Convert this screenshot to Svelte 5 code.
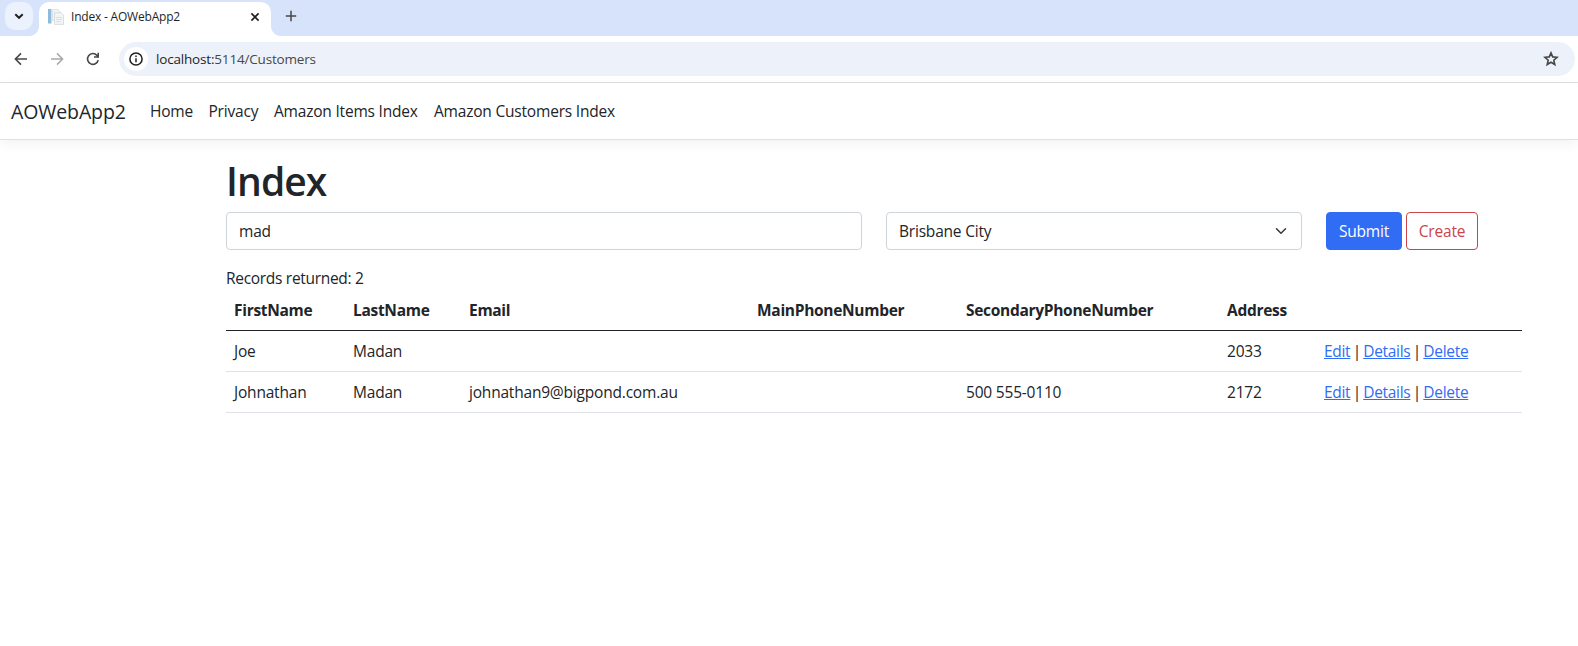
<script>
  const nav = [
    { label: 'Home', w: 42.5 },
    { label: 'Privacy', w: 49.5 },
    { label: 'Amazon Items Index', w: 144 },
    { label: 'Amazon Customers Index', w: 181 }
  ];
  const columns = ['FirstName', 'LastName', 'Email', 'MainPhoneNumber', 'SecondaryPhoneNumber', 'Address', ''];
  const rows = [
    ['Joe', 'Madan', '', '', '', '2033'],
    ['Johnathan', 'Madan', 'johnathan9@bigpond.com.au', '', '500 555-0110', '2172']
  ];
</script>

<div class="window">
  <div class="tabstrip">
    <div class="search-tabs">
      <svg width="28" height="28" viewBox="0 0 28 28"><path d="M10.3 12.2 14 15.8l3.7-3.6" fill="none" stroke="#1f1f1f" stroke-width="1.9" /></svg>
    </div>
    <div class="tab">
      <svg class="favicon" width="16" height="16" viewBox="0 0 16 16">
        <path d="M4.5.4H10l2 2v9H4.5z" fill="#f1f4f6" stroke="#d2d8dc" stroke-width=".7" />
        <rect x="0" y="0" width="3" height="14.5" fill="#8dbbdd" />
        <path d="M3 0h1.2v14.5H3z" fill="#d5e3ed" />
        <path d="M6.5 3.8h6.6l2.4 2.2v9.4h-9z" fill="#f3f5f6" stroke="#cdd3d7" stroke-width=".7" />
        <path d="M8 8.5h6M8 10.5h6M8 12.5h5" stroke="#d3d9dd" stroke-width=".8" />
      </svg>
      <span class="title">Index - AOWebApp2</span>
      <svg class="close" width="10" height="10" viewBox="0 0 10 10"><path d="M1.4 1.4l7.2 7.2M8.6 1.4 1.4 8.6" stroke="#1f1f1f" stroke-width="1.6" /></svg>
    </div>
    <svg class="plus" width="12" height="12" viewBox="0 0 12 12"><path d="M6 .8v10.4M.8 6h10.4" stroke="#474747" stroke-width="1.5" /></svg>
  </div>
  <div class="toolbar">
    <svg class="tool" width="16" height="16" viewBox="0 0 16 16"><path d="M14 8H3M8 2.4 2.4 8 8 13.6" fill="none" stroke="#474747" stroke-width="1.6" /></svg>
    <svg class="tool" width="16" height="16" viewBox="0 0 16 16"><path d="M2 8h11M8 2.4 13.6 8 8 13.6" fill="none" stroke="#a9a9a9" stroke-width="1.5" /></svg>
    <svg class="tool" width="16" height="16" viewBox="0 0 16 16"><path d="M13.2 9.1A5.4 5.4 0 1 1 12 4.4l1.5 1.6" fill="none" stroke="#474747" stroke-width="1.6" /><path d="M14 1.8v5H9V5.3h3.4V1.8z" fill="#474747" /></svg>
    <div class="omnibox">
      <div class="info">
        <svg width="14" height="14" viewBox="0 0 14 14"><circle cx="7" cy="7" r="6.1" fill="none" stroke="#1f1f1f" stroke-width="1.5" /><path d="M7 6.2v4.1M7 3.5V5" stroke="#1f1f1f" stroke-width="1.5" /></svg>
      </div>
      <span class="url"><b>localhost:</b>5114/Customers</span>
      <svg class="star" width="16" height="16" viewBox="0 0 16 16"><path d="M8 1.9l1.7 4 4.4.4-3.3 2.9 1 4.3L8 11.2l-3.8 2.3 1-4.3-3.3-2.9 4.4-.4z" fill="none" stroke="#474747" stroke-width="1.6" /></svg>
    </div>
  </div>

  <header>
    <a class="brand" href="#home">AOWebApp2</a>
    <nav>
      {#each nav as item}
        <a href="#nav" style:width="{item.w}px">{item.label}</a>
      {/each}
    </nav>
  </header>

  <main>
    <h1>Index</h1>
    <form>
      <div class="control">mad</div>
      <div class="control select">
        <span>Brisbane City</span>
        <svg width="16" height="12" viewBox="0 0 16 16" preserveAspectRatio="xMidYMid meet"><path fill="none" stroke="#343a40" stroke-linecap="round" stroke-linejoin="round" stroke-width="2" d="m2 5 6 6 6-6" /></svg>
      </div>
      <div class="actions">
        <button type="button" class="primary">Submit</button>
        <button type="button" class="danger">Create</button>
      </div>
    </form>
    <div class="count">Records returned: 2</div>
    <table>
      <colgroup><col class="c1" /><col class="c2" /><col class="c3" /><col class="c4" /><col class="c5" /><col class="c6" /><col /></colgroup>
      <thead>
        <tr>{#each columns as c}<th>{c}</th>{/each}</tr>
      </thead>
      <tbody>
        {#each rows as r}
          <tr>
            {#each r as v}<td>{v}</td>{/each}
            <td class="links"><a href="#edit">Edit</a> | <a href="#details">Details</a> | <a href="#delete">Delete</a></td>
          </tr>
        {/each}
      </tbody>
    </table>
  </main>
</div>

<style>
  :global(body) { margin: 0; background: #fff; overflow: hidden; }
  .window {
    height: 646px;
    font: 15.5px/24px "Segoe UI", "Open Sans", "Noto Sans", sans-serif;
    color: #212529;
    letter-spacing: -0.2px;
  }
  svg { display: block; flex: none; }
  .tabstrip { height: 36px; background: #d7e2fb; display: flex; align-items: flex-start; }
  .search-tabs { width: 28px; height: 28px; margin: 2px 6px 0 5px; border-radius: 10px; background: #ebf1fd; }
  .tab {
    position: relative; box-sizing: border-box; width: 232px; height: 34px; margin-top: 2px;
    padding: 1px 11px 6px 9px; border-radius: 10px 10px 0 0; background: #fff;
    display: flex; align-items: center;
  }
  .tab::before, .tab::after { content: ""; position: absolute; bottom: 0; width: 10px; height: 10px; }
  .tab::before { left: -10px; background: radial-gradient(circle at 0 0, transparent 9.5px, #fff 10.5px); }
  .tab::after { right: -10px; background: radial-gradient(circle at 100% 0, transparent 9.5px, #fff 10.5px); }
  .title { margin: 1px 0 0 7px; font-size: 12px; line-height: 16px; color: #1f1f1f; letter-spacing: -0.2px; white-space: nowrap; }
  .close { margin-left: auto; }
  .plus { margin: 10px 0 0 14px; }
  .toolbar {
    box-sizing: border-box; height: 47px; padding: 0 3px 1px 13px; border-bottom: 1px solid #dedfe0;
    display: flex; align-items: center; background: #fff;
  }
  .tool { margin-right: 20px; }
  .omnibox {
    flex: 1; box-sizing: border-box; height: 34px; margin-left: -2px; padding: 0 16px 0 5px; border-radius: 17px;
    background: #edf2fa; display: flex; align-items: center;
  }
  .info { width: 24px; height: 24px; border-radius: 50%; background: #fff; display: grid; place-items: center; }
  .url { margin-left: 8px; font-size: 13.5px; line-height: 20px; color: #474747; letter-spacing: -0.18px; }
  .url b { font-weight: 400; color: #1f1f1f; }
  .star { margin-left: auto; }
  header {
    box-sizing: border-box; height: 57px; padding: 0 11px; border-bottom: 1px solid #dee2e6;
    box-shadow: 0 4px 12px rgba(0, 0, 0, .05); display: flex; align-items: center;
  }
  header a { color: #212529; text-decoration: none; white-space: nowrap; }
  .brand { width: 115px; padding-top: 2px; margin-right: 24px; font-size: 19.5px; line-height: 30px; letter-spacing: -0.1px; }
  nav { display: flex; gap: 16px; }
  main { width: 1296px; padding-top: 17px; margin-left: 226px; }
  h1 { margin: 0 0 7px; font-size: 39px; line-height: 48px; font-weight: 600; letter-spacing: -0.9px; }
  form { display: grid; grid-template-columns: 636px 416px 1fr; gap: 24px; }
  .control {
    box-sizing: border-box; height: 38px; padding: 6px 12px; border: 1px solid #ced4da; border-radius: 4px;
  }
  .select { display: flex; align-items: center; justify-content: space-between; }
  .actions { display: flex; gap: 4px; }
  button {
    box-sizing: border-box; height: 38px; padding: 0; border-radius: 4px; font: inherit; letter-spacing: inherit;
  }
  .primary { width: 76px; border: 1px solid #316cf4; background: #316cf4; color: #fff; }
  .danger { width: 72px; border: 1px solid #cb444a; background: #fff; color: #cb444a; }
  .count { margin-top: 16px; letter-spacing: -0.3px; }
  table { width: 100%; table-layout: fixed; border-collapse: separate; border-spacing: 0; }
  .c1 { width: 119px; } .c2 { width: 116px; } .c3 { width: 288px; } .c4 { width: 209px; } .c5 { width: 261px; } .c6 { width: 97px; }
  th, td { height: 24px; padding: 8px; text-align: left; border-bottom: 1px solid #dee2e6; white-space: nowrap; }
  th { font-weight: 700; border-bottom-color: #212529; letter-spacing: -0.3px; }
  .links { word-spacing: -1.4px; letter-spacing: -0.3px; }
  .links a { color: #316cf4; text-decoration: underline; }
</style>
